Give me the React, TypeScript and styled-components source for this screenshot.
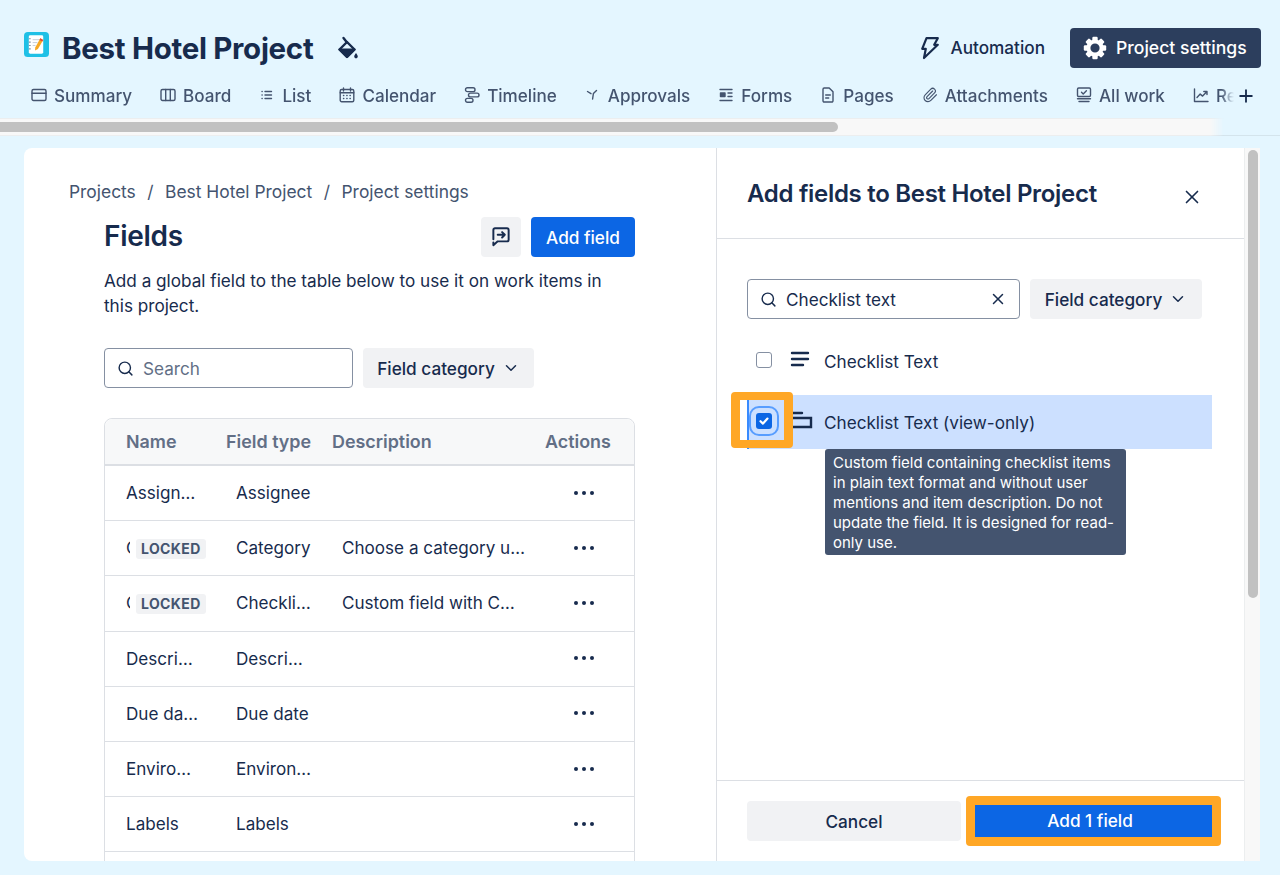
import React from 'react';
import styled, { createGlobalStyle } from 'styled-components';
import { ChevronDown, Paperclip, Plus, Search, X } from 'lucide-react';

const GlobalStyle = createGlobalStyle`
  html, body {
    margin: 0;
    padding: 0;
    height: 100%;
    overflow: hidden;
    background: #e4f6ff;
  }
  * { box-sizing: border-box; }
  body {
    font-family: Inter, "Liberation Sans", sans-serif;
    color: #172b4d;
  }
`;

const Page = styled.div`
  width: 1280px;
  height: 875px;
  padding-top: 28px;
  display: flex;
  flex-direction: column;
  overflow: hidden;
  background: #e4f6ff;
`;

const Header = styled.header`
  height: 40px;
  flex: none;
  display: flex;
  align-items: center;
  padding: 0 19px 0 24px;
`;

const Logo = styled.svg`
  width: 25px;
  height: 25px;
  flex: none;
  margin: -7px 13px 0 0;
`;

const ProjectTitle = styled.h1`
  margin: 0;
  font-size: 29.5px;
  line-height: 40px;
  font-weight: 700;
  letter-spacing: -0.3px;
  color: #172b4d;
`;

const BucketIcon = styled.svg`
  width: 20px;
  height: 24px;
  margin-left: 25px;
  color: #172b4d;
`;

const HeaderActions = styled.div`
  margin-left: auto;
  display: flex;
  align-items: center;
`;

const AutomationLink = styled.a`
  display: flex;
  align-items: center;
  gap: 10px;
  padding-bottom: 1px;
  font-size: 17.2px;
  font-weight: 500;
  color: #172b4d;
  margin-right: 25px;
`;

const SettingsButton = styled.button`
  height: 40px;
  width: 191px;
  display: flex;
  align-items: center;
  gap: 9px;
  padding: 0 0 1px 13px;
  border: 0;
  border-radius: 4px;
  background: #2c3e5d;
  color: #fff;
  font: 500 17.6px Inter, "Liberation Sans", sans-serif;
  white-space: nowrap;
`;

const TabsRow = styled.nav`
  height: 40px;
  margin-top: 8px;
  flex: none;
  display: flex;
  align-items: center;
  padding-left: 31px;
`;

const TabsScroller = styled.div`
  width: 1205px;
  flex: none;
  margin-top: -2px;
  display: flex;
  align-items: center;
  gap: 28px;
  overflow: hidden;
  -webkit-mask-image: linear-gradient(to right, #000 1190px, transparent 1203px);
  mask-image: linear-gradient(to right, #000 1190px, transparent 1203px);
`;

const Tab = styled.a`
  flex: none;
  display: flex;
  align-items: center;
  gap: 7px;
  font-size: 17.1px;
  font-weight: 500;
  color: #44546f;
  white-space: nowrap;
`;

const TabSvg = styled.svg`
  width: 16px;
  height: 16px;
  flex: none;
  fill: none;
  stroke: currentColor;
  stroke-width: 1.4;
  stroke-linecap: round;
  stroke-linejoin: round;
`;

const AddTab = styled.span`
  display: flex;
  color: #172b4d;
`;

const ScrollRow = styled.div`
  height: 18px;
  margin-top: 2px;
  flex: none;
  border-bottom: 1px solid #d4e4ec;
`;

const PageScrollbar = styled.div`
  height: 18px;
  width: 1224px;
  padding-top: 3px;
  background: #f8f8f8;
  border-top: 1px solid #eceeef;
  border-bottom: 1px solid #eceeef;
  -webkit-mask-image: linear-gradient(to right, #000 1210px, transparent 1224px);
  mask-image: linear-gradient(to right, #000 1210px, transparent 1224px);
`;

const PageThumb = styled.div`
  width: 838px;
  height: 10px;
  border-radius: 0 5px 5px 0;
  background: #c1c1c1;
`;

const Panel = styled.main`
  margin: 12px 0 0 24px;
  width: 1236px;
  height: 713px;
  flex: none;
  display: flex;
  background: #fff;
  border-radius: 8px 0 0 8px;
  overflow: hidden;
`;

const FieldsPane = styled.section`
  width: 692px;
  flex: none;
  padding: 32px 0 0 45px;
`;

const Breadcrumbs = styled.div`
  display: flex;
  gap: 11.5px;
  height: 24px;
  padding-bottom: 1px;
  align-items: center;
  font-size: 17.4px;
  color: #44546f;
`;

const FieldsBody = styled.div`
  width: 531px;
  margin: 13px 0 0 35px;
`;

const TitleRow = styled.div`
  display: flex;
  align-items: center;
  gap: 10px;
`;

const FieldsTitle = styled.h2`
  margin: 0 auto 2px 0;
  font-size: 28px;
  font-weight: 600;
  letter-spacing: -0.3px;
  color: #172b4d;
`;

const GreyButton = styled.button<{ $w?: number }>`
  height: 40px;
  width: ${({ $w }) => ($w ? `${$w}px` : 'auto')};
  display: inline-flex;
  align-items: center;
  justify-content: center;
  gap: 7px;
  padding: 0;
  border: 0;
  border-radius: 4px;
  background: #f1f2f4;
  color: #172b4d;
  font: 500 17.2px Inter, "Liberation Sans", sans-serif;
`;

const PrimaryButton = styled.button`
  width: 104px;
  height: 40px;
  padding: 0;
  border: 0;
  border-radius: 4px;
  background: #0c66e4;
  color: #fff;
  font: 500 17.2px Inter, "Liberation Sans", sans-serif;
`;

const Description = styled.p`
  margin: 11px 0 0;
  max-width: 515px;
  font-size: 17.15px;
  line-height: 25px;
  color: #172b4d;
`;

const FilterRow = styled.div<{ $top: number }>`
  margin-top: ${({ $top }) => $top}px;
  display: flex;
  gap: 10px;
`;

const SearchBox = styled.div<{ $w: number }>`
  width: ${({ $w }) => $w}px;
  height: 40px;
  display: flex;
  align-items: center;
  gap: 9px;
  padding: 0 12px;
  border: 1px solid #8590a2;
  border-radius: 4px;
  background: #fff;
  font-size: 17.15px;
  color: #172b4d;
`;

const Placeholder = styled.span`
  color: #626f86;
`;

const SearchValue = styled.span`
  flex: 1;
`;

const Table = styled.div`
  margin-top: 30px;
  border: 1px solid #dcdfe4;
  border-radius: 8px 8px 0 0;
`;

const TableHead = styled.div`
  height: 47px;
  display: grid;
  grid-template-columns: 100px 106px 213px 1fr;
  align-items: center;
  padding-left: 21px;
  background: #f7f8f9;
  border-bottom: 2px solid #dcdfe4;
  border-radius: 8px 8px 0 0;
  font-size: 17.9px;
  font-weight: 600;
  color: #626f86;
`;

const TableRow = styled.div`
  height: 55.2px;
  display: grid;
  grid-template-columns: 110px 106px 1fr 100px;
  align-items: center;
  padding: 0 0 1px 21px;
  border-bottom: 1px solid #dcdfe4;
  font-size: 17.1px;
  color: #172b4d;
`;

const NameCell = styled.div`
  display: flex;
  align-items: center;
  gap: 6px;
`;

const ClippedName = styled.span`
  width: 4px;
  overflow: hidden;
`;

const Lozenge = styled.span`
  height: 20px;
  margin-top: 2px;
  padding: 0 5px;
  display: inline-flex;
  align-items: center;
  border-radius: 3px;
  background: #f1f2f4;
  font-size: 14px;
  font-weight: 700;
  letter-spacing: 0.4px;
  color: #44546f;
`;

const RowActions = styled.div`
  display: flex;
  justify-content: center;
  gap: 4px;
`;

const Dot = styled.i`
  width: 4px;
  height: 4px;
  border-radius: 50%;
  background: #172b4d;
`;

const Drawer = styled.aside`
  width: 528px;
  flex: none;
  display: flex;
  flex-direction: column;
  border-left: 1px solid #dcdfe4;
`;

const DrawerHeader = styled.div`
  height: 91px;
  flex: none;
  display: flex;
  align-items: center;
  padding: 0 41px 0 30px;
  border-bottom: 1px solid #dcdfe4;
`;

const DrawerTitle = styled.h2`
  margin: 0 auto 0 0;
  font-size: 24px;
  font-weight: 600;
  letter-spacing: -0.3px;
  color: #172b4d;
`;

const CloseIcon = styled.span`
  display: flex;
  margin-top: 8px;
  color: #172b4d;
`;

const DrawerBody = styled.div`
  flex: 1;
  padding: 0 0 0 30px;
`;

const OptionList = styled.div`
  margin-top: 15px;
  display: flex;
  flex-direction: column;
  gap: 7px;
`;

const Option = styled.div<{ $selected?: boolean }>`
  position: relative;
  width: 465px;
  height: 54px;
  display: flex;
  align-items: center;
  padding-left: ${({ $selected }) => ($selected ? 7 : 9)}px;
  font-size: 17.15px;
  color: #172b4d;
  background: ${({ $selected }) => ($selected ? '#cce0ff' : 'transparent')};
  border-left: ${({ $selected }) => ($selected ? '2px solid #388bff' : '0')};
`;

const CheckRing = styled.span<{ $on?: boolean }>`
  width: 16px;
  height: 16px;
  flex: none;
  margin-top: -3px;
  display: flex;
  align-items: center;
  justify-content: center;
  border-radius: 3px;
  background: ${({ $on }) => ($on ? '#0c66e4' : '#fff')};
  border: ${({ $on }) => ($on ? '0' : '1px solid #8590a2')};
  outline: ${({ $on }) => ($on ? '2px solid #579dff' : '0')};
  outline-offset: 5px;
`;

const OptionIcon = styled.svg`
  width: 22px;
  height: 18px;
  flex: none;
  margin: -4px 12px 0 18px;
  stroke: #172b4d;
  stroke-width: 2.4;
  fill: none;
  stroke-linecap: round;
  overflow: visible;
`;

const OrangeFrame = styled.span`
  position: absolute;
  left: -18px;
  top: -3px;
  width: 62px;
  height: 56px;
  border: solid #ffa726;
  border-width: 8px 9px;
  border-radius: 4px;
`;

const Tooltip = styled.div`
  position: absolute;
  left: 76px;
  top: 54px;
  width: 301px;
  padding: 4px 8px 2px;
  border-radius: 3px;
  background: #44546f;
  color: #fff;
  font-size: 15px;
  line-height: 20px;
`;

const DrawerFooter = styled.div`
  height: 81px;
  flex: none;
  display: flex;
  align-items: center;
  padding-left: 30px;
  border-top: 1px solid #dcdfe4;
`;

const OrangeWrap = styled.span`
  margin-left: 5px;
  display: flex;
  padding: 9px;
  border-radius: 4px;
  background: #ffa726;
`;

const AddFieldsButton = styled.button`
  width: 237px;
  height: 32px;
  border: 0;
  padding: 0 7px 1px 0;
  background: #0c66e4;
  color: #fff;
  font: 500 17.2px Inter, "Liberation Sans", sans-serif;
`;

const DrawerScrollbar = styled.div`
  width: 16px;
  flex: none;
  padding: 2px 3px;
  background: #f8f8f8;
  border-left: 1px solid #eceeef;
`;

const DrawerThumb = styled.div`
  width: 10px;
  height: 448px;
  border-radius: 5px;
  background: #c1c1c1;
`;

const GearIcon = () => (
  <svg width="24" height="24" viewBox="0 0 24 24" fill="#fff" style={{ flex: 'none' }}>
    {[0, 45, 90, 135, 180, 225, 270, 315].map((a) => (
      <rect key={a} x="9.3" y="0.8" width="5.4" height="5" rx="1.2" transform={`rotate(${a} 12 12)`} />
    ))}
    <circle cx="12" cy="12" r="6.6" fill="none" stroke="#fff" strokeWidth="4" />
  </svg>
);

const tabs: { label: string; icon: React.ReactNode }[] = [
  {
    label: 'Summary',
    icon: (
      <TabSvg viewBox="0 0 16 16">
        <rect x="1" y="2.5" width="14" height="11" rx="1.5" />
        <path d="M1 6.2h14" />
      </TabSvg>
    ),
  },
  {
    label: 'Board',
    icon: (
      <TabSvg viewBox="0 0 16 16">
        <rect x="1" y="2.5" width="14" height="11" rx="1.5" />
        <path d="M5.7 2.5v11M10.3 2.5v11" />
      </TabSvg>
    ),
  },
  {
    label: 'List',
    icon: (
      <TabSvg viewBox="0 0 16 16">
        <path d="M3 4.5h.2M3 8h.2M3 11.5h.2M6 4.5h6.5M6 8h6.5M6 11.5h6.5" />
      </TabSvg>
    ),
  },
  {
    label: 'Calendar',
    icon: (
      <TabSvg viewBox="0 0 16 16">
        <rect x="1.2" y="2.5" width="13.6" height="12.2" rx="1.5" />
        <path d="M4.5 1v3M11.5 1v3M1.2 5.8h13.6" />
        <path d="M4.5 8.5h.3M7.8 8.5h.3M11 8.5h.3M4.5 11.5h.3M7.8 11.5h.3M11 11.5h.3" />
      </TabSvg>
    ),
  },
  {
    label: 'Timeline',
    icon: (
      <TabSvg viewBox="0 0 16 16">
        <rect x="1.5" y="0.8" width="9.5" height="3.8" rx="1.9" />
        <rect x="4.5" y="6.1" width="10.5" height="3.8" rx="1.9" />
        <rect x="1.5" y="11.4" width="7.5" height="3.8" rx="1.9" />
      </TabSvg>
    ),
  },
  {
    label: 'Approvals',
    icon: (
      <TabSvg viewBox="0 0 16 16">
        <path d="M2.5 4.5l3.5 2.2M11.5 3.5L8.4 6.5 7.6 12" />
      </TabSvg>
    ),
  },
  {
    label: 'Forms',
    icon: (
      <TabSvg viewBox="0 0 16 16">
        <path d="M2 2.5h12M2 13.5h12M10 6h4M10 9.5h4" />
        <rect x="2.5" y="6" width="4.5" height="3.5" fill="currentColor" />
      </TabSvg>
    ),
  },
  {
    label: 'Pages',
    icon: (
      <TabSvg viewBox="0 0 16 16">
        <path d="M3 2.2A1.2 1.2 0 0 1 4.2 1h5L13 4.8v9A1.2 1.2 0 0 1 11.8 15H4.2A1.2 1.2 0 0 1 3 13.8z" />
        <path d="M5.7 8h4.6M5.7 11h3" />
      </TabSvg>
    ),
  },
  { label: 'Attachments', icon: <Paperclip size={16} strokeWidth={1.7} /> },
  {
    label: 'All work',
    icon: (
      <TabSvg viewBox="0 0 16 16">
        <rect x="1.5" y="1" width="13" height="8.5" rx="1.2" />
        <path d="M5.5 5.3l1.7 1.6 3.2-3.2M1.5 11.8h13M3 14.5h10" />
      </TabSvg>
    ),
  },
  {
    label: 'Reports',
    icon: (
      <TabSvg viewBox="0 0 16 16">
        <path d="M1.5 2v12.5H15M4 10.5l3.2-3.4 2.4 2L14 4.5M10.8 4.5H14v3" />
      </TabSvg>
    ),
  },
];

type Field = { name: string; locked?: boolean; type: string; description?: string };

const fields: Field[] = [
  { name: 'Assign…', type: 'Assignee' },
  { name: 'C', locked: true, type: 'Category', description: 'Choose a category u…' },
  { name: 'C', locked: true, type: 'Checkli…', description: 'Custom field with C…' },
  { name: 'Descri…', type: 'Descri…' },
  { name: 'Due da…', type: 'Due date' },
  { name: 'Enviro…', type: 'Environ…' },
  { name: 'Labels', type: 'Labels' },
  { name: 'Priority', type: 'Priority' },
];

const App = () => {
  return (
    <Page>
      <GlobalStyle />
      <Header>
        <Logo viewBox="0 0 26 26">
          <rect width="26" height="26" rx="4" fill="#1fc0e6" />
          <rect x="5" y="3.5" width="15" height="19" rx="1.5" fill="#fff" />
          <path d="M5 7h2M5 10.5h2M5 14h2M5 17.5h2" stroke="#8a94a6" strokeWidth="1.2" />
          <path d="M9 8h7M9 11h5M9 14h3" stroke="#c5ccd6" strokeWidth="1" />
          <path d="M17 6.5l3 1.8-5.5 9.5-3 1.5.2-3.3z" fill="#f7a823" />
          <path d="M17 6.5l3 1.8-1 1.7-3-1.8z" fill="#e8483a" />
        </Logo>
        <ProjectTitle>Best Hotel Project</ProjectTitle>
        <BucketIcon viewBox="0 0 20 24">
          <path d="M5.5 2l3.5 4.5" fill="none" stroke="currentColor" strokeWidth="2.4" strokeLinecap="round" />
          <path d="M9 6l7.5 7.5L9 21l-7.5-7.5z" fill="none" stroke="currentColor" strokeWidth="2.4" strokeLinejoin="round" />
          <path d="M1.5 13.5h15L9 21z" fill="currentColor" stroke="currentColor" strokeWidth="2" strokeLinejoin="round" />
          <path d="M18 17c1 1.6 1.8 2.6 1.8 3.6a1.8 1.8 0 0 1-3.6 0c0-1 .8-2 1.8-3.6z" fill="currentColor" />
        </BucketIcon>
        <HeaderActions>
          <AutomationLink>
            <svg width="20" height="24" viewBox="0 0 20 24" fill="none" stroke="#172b4d" strokeWidth="2.2" strokeLinejoin="round">
              <path d="M6.5 2.2h11.3l-3.6 6.6h3.6L4 22l1.8-9.2H2.2z" />
            </svg>
            Automation
          </AutomationLink>
          <SettingsButton>
            <GearIcon />
            Project settings
          </SettingsButton>
        </HeaderActions>
      </Header>
      <TabsRow>
        <TabsScroller>
          {tabs.map((t) => (
            <Tab key={t.label}>
              {t.icon}
              {t.label}
            </Tab>
          ))}
        </TabsScroller>
        <AddTab>
          <Plus size={20} strokeWidth={2.2} />
        </AddTab>
      </TabsRow>
      <ScrollRow>
        <PageScrollbar>
          <PageThumb />
        </PageScrollbar>
      </ScrollRow>
      <Panel>
        <FieldsPane>
          <Breadcrumbs>
            <span>Projects</span>
            <span>/</span>
            <span>Best Hotel Project</span>
            <span>/</span>
            <span>Project settings</span>
          </Breadcrumbs>
          <FieldsBody>
            <TitleRow>
              <FieldsTitle>Fields</FieldsTitle>
              <GreyButton $w={40}>
                <svg width="24" height="24" viewBox="0 0 22 22" fill="none" stroke="#172b4d" strokeWidth="1.8" strokeLinejoin="round" strokeLinecap="round">
                  <path d="M4 13V4.5A1.5 1.5 0 0 1 5.5 3h11A1.5 1.5 0 0 1 18 4.5v9a1.5 1.5 0 0 1-1.5 1.5H8l-4 3.5V16" />
                  <path d="M8 9h6.5M12 6.5L14.5 9 12 11.5" />
                </svg>
              </GreyButton>
              <PrimaryButton>Add field</PrimaryButton>
            </TitleRow>
            <Description>Add a global field to the table below to use it on work items in this project.</Description>
            <FilterRow $top={30}>
              <SearchBox $w={249}>
                <Search size={17} strokeWidth={2} color="#172b4d" />
                <Placeholder>Search</Placeholder>
              </SearchBox>
              <GreyButton $w={171}>
                Field category
                <ChevronDown size={18} strokeWidth={2} />
              </GreyButton>
            </FilterRow>
            <Table>
              <TableHead>
                <span>Name</span>
                <span>Field type</span>
                <span>Description</span>
                <span>Actions</span>
              </TableHead>
              {fields.map((f) => (
                <TableRow key={f.type}>
                  <NameCell>
                    {f.locked ? (
                      <>
                        <ClippedName>{f.name}</ClippedName>
                        <Lozenge>LOCKED</Lozenge>
                      </>
                    ) : (
                      f.name
                    )}
                  </NameCell>
                  <span>{f.type}</span>
                  <span>{f.description}</span>
                  <RowActions>
                    <Dot />
                    <Dot />
                    <Dot />
                  </RowActions>
                </TableRow>
              ))}
            </Table>
          </FieldsBody>
        </FieldsPane>
        <Drawer>
          <DrawerHeader>
            <DrawerTitle>Add fields to Best Hotel Project</DrawerTitle>
            <CloseIcon>
              <X size={22} strokeWidth={1.8} />
            </CloseIcon>
          </DrawerHeader>
          <DrawerBody>
            <FilterRow $top={40}>
              <SearchBox $w={273}>
                <Search size={17} strokeWidth={2} color="#172b4d" />
                <SearchValue>Checklist text</SearchValue>
                <X size={18} strokeWidth={2} color="#172b4d" />
              </SearchBox>
              <GreyButton $w={172}>
                Field category
                <ChevronDown size={18} strokeWidth={2} />
              </GreyButton>
            </FilterRow>
            <OptionList>
              <Option>
                <CheckRing />
                <OptionIcon viewBox="0 0 22 18">
                  <path d="M2 3h16M2 9h16M2 15h11" />
                </OptionIcon>
                Checklist Text
              </Option>
              <Option $selected>
                <CheckRing $on>
                  <svg width="12" height="12" viewBox="0 0 12 12" fill="none" stroke="#fff" strokeWidth="2.2" strokeLinecap="round" strokeLinejoin="round">
                    <path d="M2.5 6.2L5 8.6 9.5 3.6" />
                  </svg>
                </CheckRing>
                <OptionIcon viewBox="0 0 22 18">
                  <path d="M3 2h9M3 7h18v9H3" />
                </OptionIcon>
                Checklist Text (view-only)
                <OrangeFrame />
                <Tooltip>
                  Custom field containing checklist items in plain text format and without user mentions and item description. Do not update the field. It is designed for read-only use.
                </Tooltip>
              </Option>
            </OptionList>
          </DrawerBody>
          <DrawerFooter>
            <GreyButton $w={214}>Cancel</GreyButton>
            <OrangeWrap>
              <AddFieldsButton>Add 1 field</AddFieldsButton>
            </OrangeWrap>
          </DrawerFooter>
        </Drawer>
        <DrawerScrollbar>
          <DrawerThumb />
        </DrawerScrollbar>
      </Panel>
    </Page>
  );
};

export default App;
